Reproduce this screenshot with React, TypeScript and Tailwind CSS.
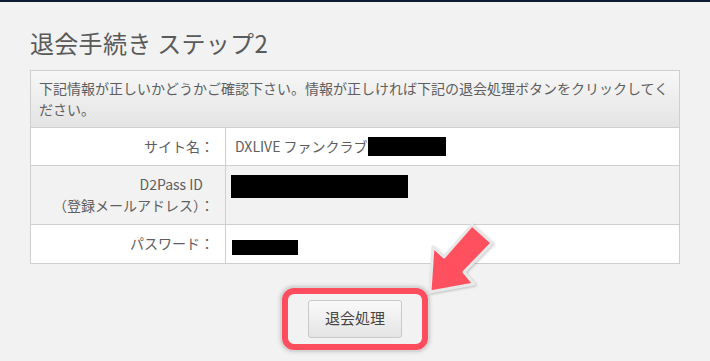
import React from 'react';

const font = { fontFamily: '"Noto Sans CJK JP", "Noto Sans", sans-serif' };

const Row: React.FC<{ label: React.ReactNode; shade?: boolean; children: React.ReactNode }> = ({ label, shade, children }) => (
  <div className={`flex border-t border-[#cfcfcf] ${shade ? 'bg-[#f2f2f2]' : 'bg-white'}`}>
    <div className="w-[195px] shrink-0 border-r border-[#cfcfcf] py-[8px] pr-[11px] text-right leading-[21px]">{label}</div>
    <div className="flex-1 py-[8px] pl-[9px] leading-[21px]">{children}</div>
  </div>
);

const Redact: React.FC<{ w: number; h: number; className?: string }> = ({ w, h, className }) => (
  <span className={`inline-block bg-black align-middle ${className ?? ''}`} style={{ width: w, height: h }} />
);

export default function App() {
  return (
    <div className="relative h-[361px] w-[710px] overflow-hidden bg-[#f2f2f2] text-[14px] text-[#5e5e5e]" style={font}>
      {/* top bar */}
      <div className="h-[2px] bg-[#0d1c33]" />

      <div className="px-[30px]">
        <h1 className="mt-[25px] text-[24px] leading-[32px] font-normal tracking-[0.3px] text-[#5a5a5a]">退会手続き ステップ2</h1>

        {/* info table */}
        <div className="mt-[11px] w-[650px] border border-[#cfcfcf]">
          <div className="bg-gradient-to-b from-[#f7f7f7] to-[#e4e4e4] px-[8px] py-[7px] leading-[21px]">
            下記情報が正しいかどうかご確認下さい。情報が正しければ下記の退会処理ボタンをクリックしてください。
          </div>
          <Row label="サイト名：">
            DXLIVE ファンクラブ<Redact w={78} h={19} className="-mt-[3px]" />
          </Row>
          <Row shade label={<><span className="mr-[11px]">D2Pass ID</span><br />（登録メールアドレス）：</>}>
            <Redact w={177} h={23} className="-ml-[4px] mt-[1px]" />
          </Row>
          <Row label="パスワード：">
            <Redact w={66} h={15} className="-ml-[3px] mt-[4px]" />
          </Row>
        </div>

        {/* submit */}
        <div className="mt-[24px] flex w-[650px] justify-center">
          <div className="rounded-[12px] border-[6px] border-[#ff4d5e] px-[20px] py-[6px] shadow-[0_0_0_2px_#d6d6d6,0_0_4px_2px_rgba(0,0,0,0.15)]">
            <button className="block h-[38px] w-[94px] rounded-[3px] border border-[#c9c9c9] bg-gradient-to-b from-[#fafafa] to-[#e4e4e4] text-[15px] text-[#444]">
              退会処理
            </button>
          </div>
        </div>
      </div>

      {/* pointer arrow */}
      <svg className="absolute left-0 top-0" width="710" height="361" viewBox="0 0 710 361">
        <polygon
          points="430,292 433,247 444,257 472,225 492,243 464,272 474,284"
          fill="#ff5060"
          stroke="#e8e8e8"
          strokeWidth="3"
          strokeLinejoin="round"
          style={{ filter: 'drop-shadow(1px 1px 1px rgba(0,0,0,0.2))' }}
        />
      </svg>
    </div>
  );
}
